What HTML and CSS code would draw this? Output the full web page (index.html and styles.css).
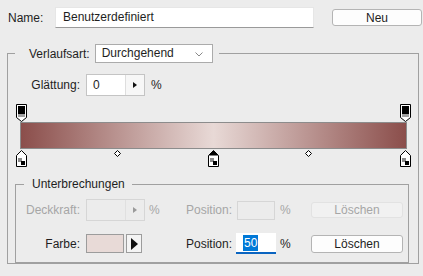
FILE: index.html
```html
<!DOCTYPE html>
<html lang="de">
<head>
    <meta charset="UTF-8">
    <title>Verläufe bearbeiten</title>
    <link rel="stylesheet" href="styles.css">
</head>
<body>
    <div class="dialog">
        <div class="name-row">
            <span class="name-label">Name:</span>
            <div class="name-input">Benutzerdefiniert</div>
            <button class="btn neu">Neu</button>
        </div>

        <fieldset class="group outer">
            <legend class="type-legend">
                <span>Verlaufsart:</span>
                <div class="select">
                    Durchgehend
                    <svg class="chevron" width="8" height="5" viewBox="0 0 8 5"><polyline points="0.5,0.5 4,4 7.5,0.5" fill="none" stroke="#888" stroke-width="1"/></svg>
                </div>
            </legend>

            <div class="smooth-row">
                <span class="field-label">Glättung:</span>
                <div class="spin">
                    <span class="spin-value">0</span>
                    <span class="spin-arrow"><i class="tri"></i></span>
                </div>
                <span class="pct">%</span>
            </div>

            <div class="gradient-editor">
                <div class="ramp"></div>

                <!-- Deckkraft-Unterbrechungen oben -->
                <svg class="stop top-stop left-end" width="11" height="18" viewBox="0 0 11 18">
                    <path d="M0.5 0.5 H10.5 V13.5 L5.5 17.5 L0.5 13.5 Z" fill="#fff" stroke="#000"/>
                    <rect x="2" y="2" width="7" height="8" fill="#000"/>
                    <rect x="2" y="10" width="7" height="3" fill="#a0a0a0"/>
                </svg>
                <svg class="stop top-stop right-end" width="11" height="18" viewBox="0 0 11 18">
                    <path d="M0.5 0.5 H10.5 V13.5 L5.5 17.5 L0.5 13.5 Z" fill="#fff" stroke="#000"/>
                    <rect x="2" y="2" width="7" height="8" fill="#000"/>
                    <rect x="2" y="10" width="7" height="3" fill="#a0a0a0"/>
                </svg>

                <!-- Farb-Unterbrechungen unten -->
                <svg class="stop bottom-stop left-end" width="11" height="17" viewBox="0 0 11 17">
                    <path d="M5.5 0.5 L10.5 5.5 V16.5 H0.5 V5.5 Z" fill="#fff" stroke="#000"/>
                    <rect x="2" y="8" width="4" height="4" fill="#8c8c8c"/>
                    <rect x="5" y="11" width="4" height="4" fill="#000"/>
                </svg>
                <svg class="stop bottom-stop middle" width="11" height="17" viewBox="0 0 11 17">
                    <path d="M5.5 0.5 L10.5 5.5 V16.5 H0.5 V5.5 Z" fill="#fff" stroke="#000"/>
                    <path d="M5.5 0.5 L10.5 5.5 H0.5 Z" fill="#000"/>
                    <rect x="2" y="8" width="4" height="4" fill="#8c8c8c"/>
                    <rect x="5" y="11" width="4" height="4" fill="#000"/>
                </svg>
                <svg class="stop bottom-stop right-end" width="11" height="17" viewBox="0 0 11 17">
                    <path d="M5.5 0.5 L10.5 5.5 V16.5 H0.5 V5.5 Z" fill="#fff" stroke="#000"/>
                    <rect x="2" y="8" width="4" height="4" fill="#8c8c8c"/>
                    <rect x="5" y="11" width="4" height="4" fill="#000"/>
                </svg>

                <!-- Mittelpunkte -->
                <svg class="midpoint first" width="7" height="7" viewBox="0 0 7 7"><path d="M3.5 0.5 L6.5 3.5 L3.5 6.5 L0.5 3.5 Z" fill="#fff" stroke="#000"/></svg>
                <svg class="midpoint second" width="7" height="7" viewBox="0 0 7 7"><path d="M3.5 0.5 L6.5 3.5 L3.5 6.5 L0.5 3.5 Z" fill="#fff" stroke="#000"/></svg>
            </div>

            <fieldset class="group inner">
                <legend class="stops-legend">Unterbrechungen</legend>

                <div class="stop-row">
                    <span class="field-label disabled">Deckkraft:</span>
                    <div class="spin is-disabled">
                        <span class="spin-value"></span>
                        <span class="spin-arrow"><i class="tri"></i></span>
                    </div>
                    <span class="pct disabled">%</span>
                    <span class="pos-label disabled">Position:</span>
                    <div class="pos-input is-disabled"></div>
                    <span class="pct disabled">%</span>
                    <button class="btn delete" disabled>Löschen</button>
                </div>

                <div class="stop-row">
                    <span class="field-label">Farbe:</span>
                    <div class="color-pick">
                        <span class="swatch"></span>
                        <span class="swatch-arrow"><i class="tri big"></i></span>
                    </div>
                    <span></span>
                    <span class="pos-label">Position:</span>
                    <div class="pos-input focused"><span class="selected">50</span></div>
                    <span class="pct">%</span>
                    <button class="btn delete">Löschen</button>
                </div>
            </fieldset>
        </fieldset>
    </div>
</body>
</html>
```

FILE: styles.css
```css
body {
    margin: 0;
    background-color: #ececec;
    font-family: "Liberation Sans", Arial, sans-serif;
    font-size: 12px;
    color: #1e1e1e;
}
.dialog {
    width: 423px;
    height: 276px;
}
.name-row {
    display: flex;
    align-items: center;
    padding: 7px 0 0 8px;
    height: 21px;
}
.name-label {
    width: 47px;
}
.name-input {
    width: 250px;
    height: 19px;
    line-height: 19px;
    padding-left: 7px;
    background-color: #fff;
    border: 1px solid #e6e6e6;
    border-bottom-color: #9a9a9a;
}
.btn {
    font-family: inherit;
    font-size: 12px;
    color: #1e1e1e;
    background-color: #fdfdfd;
    border: 1px solid #b4b4b4;
    border-radius: 3px;
    padding: 0;
}
.neu {
    width: 90px;
    height: 17px;
    margin-left: 18px;
}

.group {
    margin: 0;
    padding: 0;
    border: 1px solid #a0a0a0;
}
.outer {
    margin: 16px 0 0 7px;
    width: 412px;
    height: 220px;
    padding-bottom: 9px;
    box-sizing: border-box;
}
.type-legend {
    display: flex;
    align-items: center;
    margin-left: 7px;
    padding: 0 6px 0 14px;
}
.select {
    position: relative;
    width: 110px;
    height: 17px;
    line-height: 17px;
    margin-left: 5px;
    padding-left: 6px;
    background-color: #fff;
    border: 1px solid #ababab;
}
.chevron {
    position: absolute;
    right: 9px;
    top: 7px;
}

.smooth-row {
    display: flex;
    align-items: center;
    margin-top: 11px;
    height: 22px;
}
.field-label {
    width: 72px;
    padding-right: 6px;
    text-align: right;
}
.spin {
    display: flex;
    width: 57px;
    height: 20px;
    background-color: #fff;
    border: 1px solid #c4c4c4;
}
.spin-value {
    flex: 1;
    line-height: 20px;
    padding-left: 6px;
}
.spin-arrow {
    width: 18px;
    display: flex;
    align-items: center;
    justify-content: center;
    background-color: #f7f7f7;
    border-left: 1px solid #dedede;
}
.tri {
    display: block;
    width: 0;
    height: 0;
    border-top: 3px solid transparent;
    border-bottom: 3px solid transparent;
    border-left: 4px solid #111;
}
.tri.big {
    border-top-width: 6px;
    border-bottom-width: 6px;
    border-left-width: 7px;
}
.pct {
    margin-left: 6px;
}

.gradient-editor {
    position: relative;
    width: 387px;
    margin: 8px 0 0 12px;
    padding: 18px 0 18px;
}
.ramp {
    height: 25px;
    border: 1px solid #8c8c8c;
    background: linear-gradient(to right, #8b4e4b, #e8d9d6 50%, #8b4e4b);
}
.stop {
    position: absolute;
    display: block;
}
.top-stop {
    top: 0;
}
.bottom-stop {
    top: 46px;
}
.left-end {
    left: -4px;
}
.right-end {
    right: -4px;
}
.middle {
    left: calc(50% - 6px);
}
.midpoint {
    position: absolute;
    top: 46px;
    display: block;
}
.midpoint.first {
    left: calc(25% - 3px);
}
.midpoint.second {
    left: calc(75% - 5px);
}

.inner {
    margin: 10px 9px 0 7px;
    padding: 0 0 8px 0;
}
.stops-legend {
    margin-left: 8px;
    padding: 0 7px 0 8px;
}
.stop-row {
    display: grid;
    grid-template-columns: 70px 59px 15px 77px 38px 36px 92px;
    align-items: center;
    height: 21px;
    margin-top: 8px;
}
.stop-row + .stop-row {
    margin-top: 13px;
}
.stop-row .field-label {
    width: 64px;
}
.stop-row .pct {
    margin-left: 4px;
}
.stop-row .pct:nth-child(6) {
    margin-left: 5px;
}
.pos-label {
    text-align: right;
    padding-right: 5px;
}
.disabled {
    color: #a6a6a6;
}
.spin.is-disabled {
    background-color: #ececec;
    border-color: #d6d6d6;
}
.spin.is-disabled .spin-arrow {
    background-color: #ececec;
    border-left-color: #e0e0e0;
}
.spin.is-disabled .tri {
    border-left-color: #9a9a9a;
}
.pos-input {
    height: 19px;
    box-sizing: border-box;
}
.pos-input.is-disabled {
    border: 1px solid #d6d6d6;
}
.pos-input.focused {
    width: 40px;
    height: 21px;
    margin-left: -1px;
    padding: 2px 0 0 7px;
    background-color: #fff;
    border-bottom: 2px solid #0a64c0;
}
.selected {
    display: inline-block;
    line-height: 16px;
    padding: 0 1px;
    background-color: #0078d7;
    color: #fff;
}
.color-pick {
    display: flex;
    gap: 2px;
}
.swatch {
    width: 36px;
    height: 17px;
    background-color: #e8dad7;
    border: 1px solid #9c9c9c;
}
.swatch-arrow {
    width: 14px;
    height: 17px;
    display: flex;
    align-items: center;
    justify-content: center;
    background-color: #f4f4f4;
    border: 1px solid #9c9c9c;
}
.delete {
    width: 92px;
    height: 18px;
}
.delete:disabled {
    height: 16px;
    color: #a6a6a6;
    background-color: #f1f1f1;
    border-color: #e2e2e2;
}
```
